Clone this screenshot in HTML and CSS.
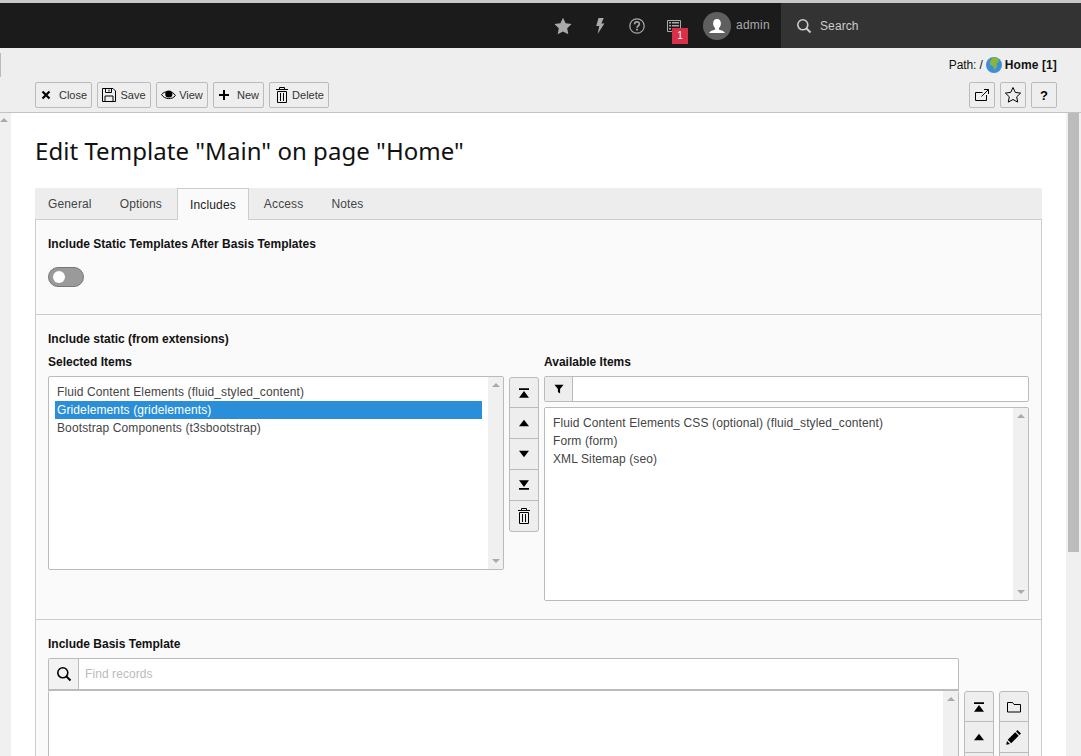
FILE: index.html
```html
<!DOCTYPE html>
<html lang="en">
<head>
    <meta charset="UTF-8">
    <meta name="viewport" content="width=device-width, initial-scale=1.0">
    <title>Edit Template</title>
    <link rel="stylesheet" href="styles.css">
</head>
<body>
    <svg class="defs" width="0" height="0">
        <symbol id="i-top" viewBox="0 0 16 16"><path d="M3 3.300h10V5H3zM8 6l5 6.700H3z"/></symbol>
        <symbol id="i-up" viewBox="0 0 16 16"><path d="M8 4.700l5 6.600H3z"/></symbol>
        <symbol id="i-down" viewBox="0 0 16 16"><path d="M8 11.300L3 4.700h10z"/></symbol>
        <symbol id="i-bottom" viewBox="0 0 16 16"><path d="M3 11h10v1.700H3zM8 10L3 3.300h10z"/></symbol>
        <symbol id="i-trash" viewBox="0 0 16 16"><path fill="none" stroke="#000" d="M3.500 4.500h9v11h-9zM2 2.500h12M5.500 2.500v-2h5v2M6.500 6v8M9.500 6v8"/></symbol>
        <symbol id="i-search" viewBox="0 0 16 16"><circle cx="6.800" cy="6.800" r="5" fill="none" stroke="currentColor" stroke-width="1.600"/><path d="M10.500 10.500l4 4" stroke="currentColor" stroke-width="2"/></symbol>
    </svg>

    <header class="topbar">
        <div class="top-item">
            <svg width="18" height="18" viewBox="0 0 18 18"><path fill="#aaa" d="M9 .8l2.600 5.500 6 .8-4.400 4.200 1.100 6L9 14.400l-5.300 2.900 1.100-6L.4 7.100l6-.8z"/></svg>
        </div>
        <div class="top-item">
            <svg width="16" height="16" viewBox="0 0 16 16"><path fill="#aaa" d="M6.500 0h5.200L9.400 5.600h3L5.600 16l1.700-8H4.200z"/></svg>
        </div>
        <div class="top-item">
            <svg width="16" height="16" viewBox="0 0 16 16"><circle cx="8" cy="8" r="7.200" fill="none" stroke="#aaa" stroke-width="1.200"/><path fill="none" stroke="#aaa" stroke-width="1.600" d="M5.600 6.200c0-3.200 4.800-3.200 4.800-.2 0 1.800-2.400 1.900-2.400 3.800"/><path fill="#aaa" d="M7.100 10.800h1.800v1.800H7.100z"/></svg>
        </div>
        <div class="top-item has-badge">
            <svg width="14" height="14" viewBox="0 0 14 14"><path fill="none" stroke="#aaa" d="M.5 1.500h13v11H.5z"/><path fill="#aaa" d="M2 3h2v1.500H2zM5 3h7v1.500H5zM2 6h2v1.500H2zM5 6h7v1.500H5zM2 9h2v1.500H2zM5 9h7v1.500H5z"/></svg>
            <span class="badge">1</span>
        </div>
        <div class="top-user">
            <span class="avatar">
                <svg width="28" height="28" viewBox="0 0 28 28"><path fill="#fff" d="M14 7c2.700 0 3.900 2 3.900 4.500 0 2-1 3.800-2 4.700v1.300c2.500 1 5.100 1.400 6.100 3.500H6c1-2.100 3.600-2.500 6.100-3.500v-1.300c-1-.9-2-2.700-2-4.700C10.100 9 11.300 7 14 7z"/></svg>
            </span>
            <span>admin</span>
        </div>
        <div class="top-search">
            <svg width="16" height="16"><use href="#i-search"/></svg>
            <span>Search</span>
        </div>
    </header>

    <div class="docheader">
        <div class="path-row">
            <span class="tick"></span>
            <span class="path">Path: /
                <svg class="globe" width="16" height="16" viewBox="0 0 16 16"><circle cx="8" cy="8" r="8" fill="#3b8fd6"/><path fill="#8bb43c" d="M6 1c2-.8 5-.6 7 1l-.5 3-2 1.500.5 3-2.500 3.500-1-3.500L4.500 8 3.500 5.500z"/></svg>
                <b>Home [1]</b></span>
        </div>
        <div class="btn-row">
            <div class="btn-left">
                <a class="btn btn-close">
                    <svg width="12" height="12" viewBox="0 0 12 12"><path stroke="#000" stroke-width="2.200" d="M2.500 2.500l7 7M9.500 2.500l-7 7"/></svg>
                    Close</a>
                <a class="btn btn-save">
                    <svg width="14" height="14" viewBox="0 0 14 14"><path fill="none" stroke="#000" d="M.5.500h10.500l2.500 2.500v10.500H.5zM3.500.5v4h6v-4M3 13.500v-5.500h8v5.500M7 1.500v2"/></svg>
                    Save</a>
                <a class="btn btn-view">
                    <svg width="15" height="12" viewBox="0 0 15 12"><path fill="none" stroke="#000" d="M.6 5.500C3 1.800 11.500 1.200 14.400 6.500 11.500 11 3 10.500.6 5.500z"/><circle cx="7.800" cy="5" r="3.600"/></svg>
                    View</a>
                <a class="btn btn-new">
                    <svg width="12" height="12" viewBox="0 0 12 12"><path stroke="#000" stroke-width="2" d="M6 1v10M1 6h10"/></svg>
                    New</a>
                <a class="btn btn-delete">
                    <svg width="16" height="16"><use href="#i-trash"/></svg>
                    Delete</a>
            </div>
            <div class="btn-right">
                <a class="btn btn-square">
                    <svg width="14" height="12" viewBox="0 0 14 12"><path fill="none" stroke="#000" d="M11.500 6v5.500H.5v-8h7M6.500 7.500L13 1M9 .5h4.500V5"/></svg>
                </a>
                <a class="btn btn-square">
                    <svg width="18" height="18" viewBox="0 0 18 18"><path fill="none" stroke="#000" d="M9 1.500l2.300 4.900 5.300.7-3.900 3.700 1 5.300L9 13.500l-4.700 2.600 1-5.300-3.900-3.700 5.300-.7z"/></svg>
                </a>
                <a class="btn btn-square btn-help">?</a>
            </div>
        </div>
    </div>

    <div class="page">
        <div class="rail"><span class="arrow-up"></span></div>
        <main class="content">
            <h1>Edit Template "Main" on page "Home"</h1>

            <ul class="tabs">
                <li>General</li>
                <li>Options</li>
                <li class="active">Includes</li>
                <li>Access</li>
                <li>Notes</li>
            </ul>

            <div class="panel">
                <section class="sec sec-toggle">
                    <label class="label">Include Static Templates After Basis Templates</label>
                    <span class="toggle"></span>
                </section>

                <section class="sec sec-static">
                    <label class="label">Include static (from extensions)</label>
                    <div class="select-grid">
                        <div>
                            <label class="label">Selected Items</label>
                            <div class="listbox list-selected">
                                <ul>
                                    <li>Fluid Content Elements (fluid_styled_content)</li>
                                    <li class="selected">Gridelements (gridelements)</li>
                                    <li>Bootstrap Components (t3sbootstrap)</li>
                                </ul>
                                <div class="sb"><span class="arrow-up"></span><span class="arrow-down"></span></div>
                            </div>
                        </div>
                        <div class="btn-stack stack-first">
                            <a><svg width="16" height="16"><use href="#i-top"/></svg></a>
                            <a><svg width="16" height="16"><use href="#i-up"/></svg></a>
                            <a><svg width="16" height="16"><use href="#i-down"/></svg></a>
                            <a><svg width="16" height="16"><use href="#i-bottom"/></svg></a>
                            <a><svg width="16" height="16"><use href="#i-trash"/></svg></a>
                        </div>
                        <div>
                            <label class="label">Available Items</label>
                            <div class="filter">
                                <span class="filter-addon">
                                    <svg width="10" height="10" viewBox="0 0 12 12"><path d="M.5 1h11L7.300 6v5.500L4.700 9.500V6z"/></svg>
                                </span>
                                <span class="filter-input"></span>
                            </div>
                            <div class="listbox list-available">
                                <ul>
                                    <li>Fluid Content Elements CSS (optional) (fluid_styled_content)</li>
                                    <li>Form (form)</li>
                                    <li>XML Sitemap (seo)</li>
                                </ul>
                                <div class="sb"><span class="arrow-up"></span><span class="arrow-down"></span></div>
                            </div>
                        </div>
                    </div>
                </section>

                <section class="sec sec-basis">
                    <label class="label">Include Basis Template</label>
                    <div class="find">
                        <span class="find-addon"><svg width="16" height="16"><use href="#i-search"/></svg></span>
                        <span class="find-input">Find records</span>
                    </div>
                    <div class="basis-row">
                        <div class="listbox list-basis">
                            <ul></ul>
                            <div class="sb"><span class="arrow-up"></span></div>
                        </div>
                        <div class="btn-stack">
                            <a><svg width="16" height="16"><use href="#i-top"/></svg></a>
                            <a><svg width="16" height="16"><use href="#i-up"/></svg></a>
                            <a><svg width="16" height="16"><use href="#i-down"/></svg></a>
                        </div>
                        <div class="btn-stack">
                            <a><svg width="16" height="16" viewBox="0 0 16 16"><path fill="none" stroke="#000" d="M1.500 3.500h5l1.500 2h6.500v7.500h-13z"/></svg></a>
                            <a><svg width="16" height="16" viewBox="0 0 16 16"><path d="M11.500 1l3.500 3.500-1.500 1.500L10 2.500zM9.200 3.300l3.500 3.500-7.500 7.500-3.500-3.500zM1 12l3 3-3.800.800z"/></svg></a>
                            <a></a>
                        </div>
                    </div>
                </section>
            </div>
        </main>
        <div class="page-scroll"><span class="thumb"></span></div>
    </div>
</body>
</html>
```

FILE: styles.css
```css
* {
    box-sizing: border-box;
}
html, body {
    height: 100%;
}
body {
    margin: 0;
    height: 756px;
    overflow: hidden;
    font-family: "Liberation Sans", Arial, sans-serif;
    font-size: 12px;
    color: #333;
    background: #fff;
    border-top: 3px solid #c8c8c8;
    display: flex;
    flex-direction: column;
}
ul {
    list-style: none;
    margin: 0;
    padding: 0;
}
svg {
    display: block;
    flex: none;
}
.defs {
    position: absolute;
}

/* top bar */
.topbar {
    height: 45px;
    flex: none;
    background: #1b1b1b;
    color: #aaa;
    display: flex;
    justify-content: flex-end;
    align-items: stretch;
}
.top-item {
    width: 37px;
    display: flex;
    align-items: center;
    justify-content: center;
    position: relative;
}
.has-badge .badge {
    position: absolute;
    left: 17px;
    top: 25px;
    width: 16px;
    height: 16px;
    background: #d9304a;
    color: #fff;
    font-size: 10px;
    line-height: 16px;
    text-align: center;
}
.top-user {
    width: 89px;
    padding-left: 11px;
    display: flex;
    align-items: center;
    gap: 5px;
    margin-top: -2px;
    letter-spacing: .25px;
}
.avatar {
    width: 28px;
    height: 28px;
    border-radius: 50%;
    background: #5f5f5f;
    overflow: hidden;
    margin-top: 2px;
}
.top-search {
    width: 300px;
    background: #333;
    color: #ccc;
    display: flex;
    align-items: center;
    gap: 8px;
    padding-left: 15px;
    letter-spacing: .1px;
}

/* doc header */
.docheader {
    height: 65px;
    flex: none;
    background: #eee;
    border-bottom: 1px solid #c3c3c3;
    padding: 0 24px 0 0;
}
.path-row {
    height: 34px;
    display: flex;
    justify-content: space-between;
    padding-top: 5px;
}
.tick {
    width: 1px;
    height: 24px;
    background: #bbb;
}
.path {
    display: flex;
    align-items: center;
    gap: 3px;
    height: 24px;
    color: #111;
    letter-spacing: -.12px;
}
.path b {
    color: #111;
    letter-spacing: .12px;
}
.btn-row {
    display: flex;
    justify-content: space-between;
    padding-left: 35px;
}
.btn-left, .btn-right {
    display: flex;
    gap: 5px;
}
.btn {
    height: 26px;
    border: 1px solid #bbb;
    border-radius: 2px;
    background: #eee;
    font-size: 11px;
    color: #333;
    display: flex;
    align-items: center;
    justify-content: center;
    gap: 5px;
}
.btn-close { width: 57px; gap: 7px; }
.btn-save { width: 54px; gap: 4px; }
.btn-view { width: 52px; gap: 3px; }
.btn-new { width: 51px; gap: 7px; }
.btn-delete { width: 60px; gap: 2px; }
.btn-square {
    width: 26px;
}
.btn-help {
    font-size: 13px;
    font-weight: bold;
    color: #000;
}

/* page body */
.page {
    flex: 1;
    min-height: 0;
    display: flex;
    overflow: hidden;
}
.rail {
    width: 11px;
    flex: none;
    background: #f0f0f0;
    padding-top: 5px;
}
.page-scroll {
    width: 15px;
    flex: none;
    background: #f0f0f0;
    padding-left: 2px;
}
.thumb {
    display: block;
    width: 11px;
    height: 439px;
    background: #bcbcbc;
}
.content {
    flex: 1;
    min-width: 0;
    padding: 0 24px;
}
h1 {
    margin: 20px 0 19px;
    font-family: "Noto Sans", sans-serif;
    font-weight: 400;
    font-size: 24px;
    line-height: 36px;
    letter-spacing: .04px;
    color: #111;
}
.tabs {
    display: flex;
    height: 32px;
    background: #ededed;
    border-radius: 2px 2px 0 0;
    border-bottom: 1px solid #ccc;
    letter-spacing: .14px;
}
.tabs li {
    padding: 0 14px;
    line-height: 33px;
    color: #444;
}
.tabs li:first-child {
    padding-left: 13px;
}
.tabs li.active {
    background: #fafafa;
    color: #222;
    border: 1px solid #ccc;
    border-bottom: 0;
    height: 32px;
    padding: 0 12px;
    margin: 0 1px;
}
.panel {
    background: #fafafa;
    border: 1px solid #ccc;
    border-top: 0;
    height: 640px;
}
.sec {
    padding: 0 12px;
    border-bottom: 1px solid #ccc;
}
.label {
    display: block;
    font-weight: bold;
    color: #111;
    line-height: 14px;
}
.sec-toggle {
    height: 95px;
    padding-top: 17px;
}
.toggle {
    display: block;
    margin-top: 16px;
    width: 36px;
    height: 20px;
    border-radius: 10px;
    background: #9a9a9a;
    border: 1px solid #777;
    position: relative;
}
.toggle::before {
    content: "";
    position: absolute;
    left: 4px;
    top: 3px;
    width: 12px;
    height: 12px;
    border-radius: 50%;
    background: #fff;
}
.sec-static {
    height: 305px;
    padding-top: 17px;
}
.select-grid {
    display: grid;
    grid-template-columns: 456px 30px 485px;
    column-gap: 5px;
    margin-top: 9px;
}
.select-grid .label {
    margin-bottom: 7px;
}
.listbox {
    display: flex;
    background: #fff;
    border: 1px solid #bbb;
    border-radius: 2px;
    overflow: hidden;
}
.listbox ul {
    flex: 1;
    padding: 6px 6px 0;
    letter-spacing: .11px;
}
.listbox li {
    height: 18px;
    line-height: 18px;
    padding-left: 2px;
    color: #444;
}
.listbox li.selected {
    background: #2a8fd8;
    color: #fff;
}
.list-selected {
    height: 194px;
}
.list-available {
    height: 194px;
    margin-top: 5px;
}
.sb {
    width: 15px;
    background: #f0f0f0;
    display: flex;
    flex-direction: column;
    justify-content: space-between;
    padding: 6px 0;
    align-items: center;
}
.arrow-up, .arrow-down {
    display: block;
    width: 0;
    height: 0;
    border-left: 4px solid transparent;
    border-right: 4px solid transparent;
}
.arrow-up {
    border-bottom: 4px solid #aaa;
}
.arrow-down {
    border-top: 4px solid #aaa;
}
.btn-stack {
    border: 1px solid #bbb;
    border-radius: 3px;
    background: #eee;
    align-self: start;
}
.stack-first {
    margin-top: 22px;
}
.btn-stack a {
    display: flex;
    align-items: center;
    justify-content: center;
    height: 31px;
    border-bottom: 1px solid #bbb;
}
.btn-stack a:first-child {
    height: 30px;
}
.btn-stack a:last-child {
    border-bottom: 0;
    height: 30px;
}
.filter {
    display: flex;
    height: 26px;
    background: #fff;
    border: 1px solid #bbb;
    border-radius: 2px;
}
.filter-addon {
    width: 28px;
    background: #eee;
    border-right: 1px solid #bbb;
    display: flex;
    align-items: center;
    justify-content: center;
}
.sec-basis {
    border-bottom: 0;
    padding-top: 17px;
}
.find {
    display: flex;
    width: 911px;
    height: 33px;
    margin-top: 7px;
    background: #fff;
    border: 1px solid #bbb;
    border-bottom-width: 2px;
    border-radius: 2px 2px 0 0;
    color: #000;
}
.find-addon {
    width: 30px;
    background: #f2f2f2;
    border-right: 1px solid #bbb;
    display: flex;
    align-items: center;
    justify-content: center;
}
.find-input {
    padding-left: 6px;
    line-height: 30px;
    color: #bbb;
    letter-spacing: .08px;
}
.basis-row {
    display: flex;
    gap: 5px;
}
.list-basis {
    width: 911px;
    height: 200px;
    border-top: 0;
}
.basis-row .btn-stack {
    width: 30px;
    flex: none;
}
```
